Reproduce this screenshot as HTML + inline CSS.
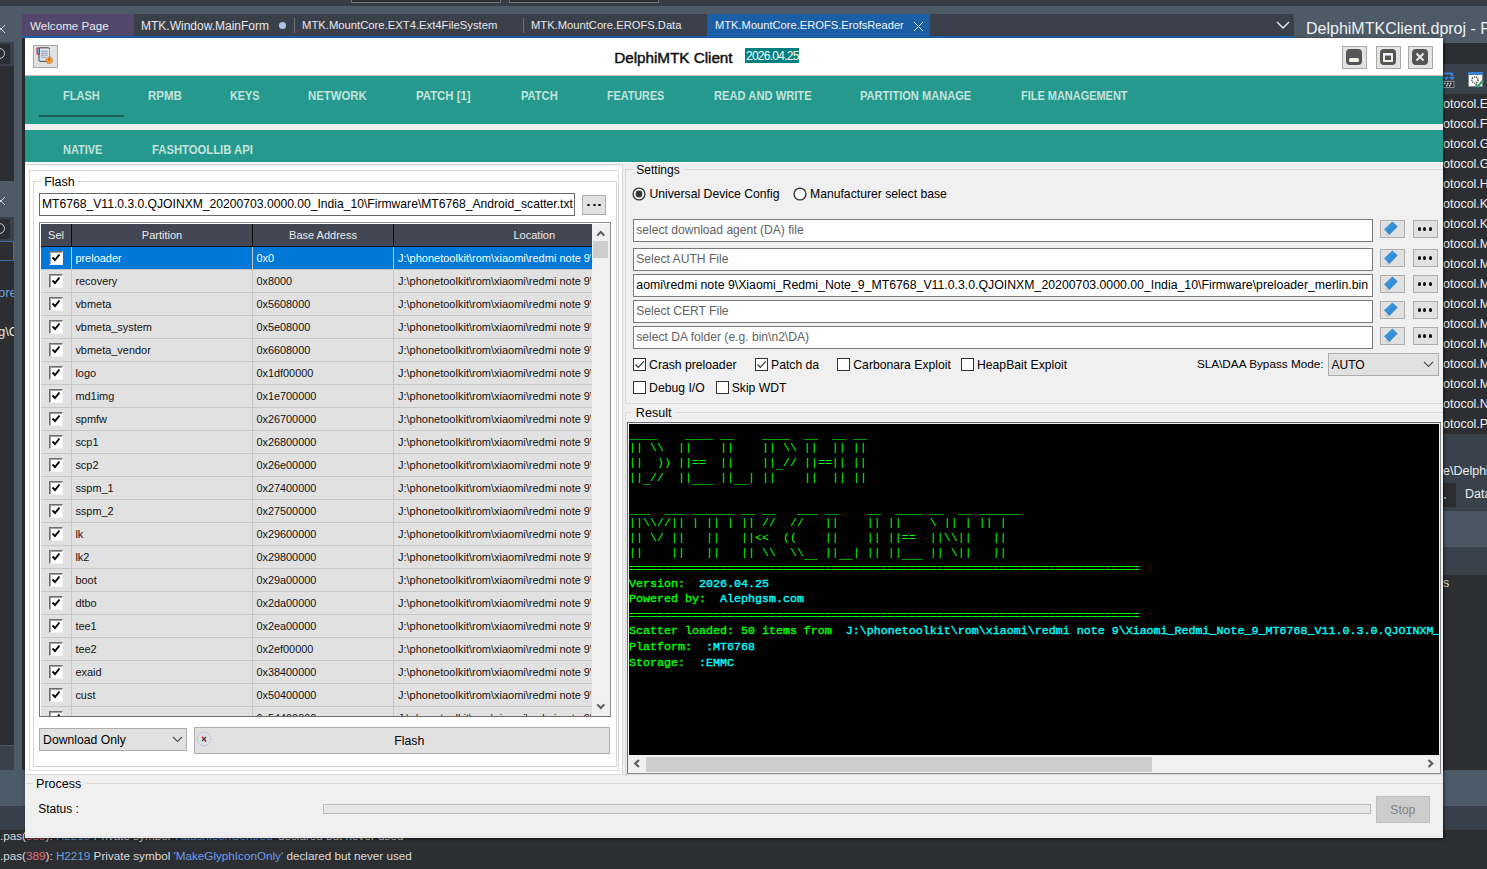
<!DOCTYPE html>
<html><head><meta charset="utf-8">
<style>
*{box-sizing:border-box;margin:0;padding:0}
html,body{width:1487px;height:869px;overflow:hidden;background:#2c2e32;font-family:"Liberation Sans",sans-serif;position:relative}
.a{position:absolute}
.t{position:absolute;white-space:pre;line-height:1}
.mono{font-family:"Liberation Mono",monospace}
</style></head><body>
<!-- IDE chrome -->
<div class="a" style="left:0;top:0;width:1487px;height:6px;background:#363c43"></div>
<div class="a" style="left:351px;top:-1px;width:150px;height:4px;border:1px solid #6d7680;border-top:none;background:#2b2e33"></div>
<div class="a" style="left:509px;top:-1px;width:150px;height:4px;border:1px solid #6d7680;border-top:none;background:#2b2e33"></div>
<div class="a" style="left:0;top:6px;width:1487px;height:37px;background:#4e5a66"></div>
<div class="a" style="left:22px;top:14px;width:1272px;height:22px;background:#39404a"></div>
<div class="a" style="left:22px;top:36px;width:1272px;height:2px;background:#1a63b0"></div>
<div class="a" style="left:22px;top:14px;width:112px;height:22px;background:#52486b"></div>
<div class="t" style="left:30px;top:20.3px;font-size:11.65px;color:#e8e8ee">Welcome Page</div>
<div class="t" style="left:141px;top:20px;font-size:12px;color:#e8e8ee">MTK.Window.MainForm</div>
<div class="a" style="left:279px;top:22px;width:7px;height:7px;border-radius:50%;background:#a9c4e4"></div>
<div class="a" style="left:294px;top:18px;width:1px;height:15px;background:#6a727c"></div>
<div class="t" style="left:302px;top:20.3px;font-size:11.28px;color:#e8e8ee">MTK.MountCore.EXT4.Ext4FileSystem</div>
<div class="a" style="left:523px;top:18px;width:1px;height:15px;background:#6a727c"></div>
<div class="t" style="left:531px;top:20.3px;font-size:11.2px;color:#e8e8ee">MTK.MountCore.EROFS.Data</div>
<div class="a" style="left:707px;top:14px;width:223px;height:22px;background:#1a5fa6"></div>
<div class="t" style="left:715px;top:20.3px;font-size:11.15px;color:#f2f4f8">MTK.MountCore.EROFS.ErofsReader</div>
<svg class="a" style="left:913px;top:21px" width="11" height="11"><path d="M1 1L10 10M10 1L1 10" stroke="#e8eef6" stroke-width="1"/></svg>
<svg class="a" style="left:1276px;top:21px" width="14" height="9"><path d="M1 1L7 7L13 1" stroke="#e0e4e8" stroke-width="1.5" fill="none"/></svg>
<div class="t" style="left:1306px;top:20.5px;font-size:16px;color:#eef0f4">DelphiMTKClient.dproj - Project1</div>

<!-- left IDE panel -->
<div class="a" style="left:0;top:38px;width:22px;height:732px;background:#4e5a66"></div>
<div class="a" style="left:22px;top:38px;width:3px;height:732px;background:#2a2c30"></div>
<div class="a" style="left:0;top:42px;width:14px;height:24px;background:#3a414a"></div>
<div class="a" style="left:0;top:44px;width:10px;height:20px;background:#2b2e33"></div>
<div class="a" style="left:-6px;top:48px;width:11px;height:11px;border:1.5px solid #c8ccd2;border-radius:50%"></div>
<div class="a" style="left:0;top:66px;width:14px;height:115px;background:#2c2e32"></div>
<div class="a" style="left:0;top:217px;width:14px;height:24px;background:#3a414a"></div>
<div class="a" style="left:0;top:219px;width:10px;height:20px;background:#2b2e33"></div>
<div class="a" style="left:-6px;top:223px;width:11px;height:11px;border:1.5px solid #c8ccd2;border-radius:50%"></div>
<div class="a" style="left:0;top:241px;width:14px;height:504px;background:#2c2e32"></div>
<div class="a" style="left:-2px;top:241px;width:16px;height:20px;border:1px solid #3d6fa8"></div>
<div class="a" style="left:0;top:280px;width:14px;height:60px;overflow:hidden"><div class="t" style="left:-2px;top:5.5px;font-size:13px;color:#6fa3de">ore</div><div class="t" style="left:-2px;top:44.5px;font-size:13px;color:#e6e6e6">g\C</div></div>

<svg class="a" style="left:0;top:195.5px" width="8" height="12"><path d="M-3 1L5 9M5 1L-3 9" stroke="#d0d4d8" stroke-width="1"/></svg>
<svg class="a" style="left:0;top:24px" width="8" height="12"><path d="M-3 1L5 9M5 1L-3 9" stroke="#d0d4d8" stroke-width="1"/></svg>
<div class="a" style="left:0;top:745.5px;width:14px;height:25px;background:#39424c"></div>
<div class="a" style="left:0;top:770px;width:1487px;height:36px;background:#4c5a67"></div>
<div class="a" style="left:0;top:806px;width:1487px;height:24px;background:#37404a"></div>

<!-- right IDE panel -->
<div class="a" style="left:1443px;top:43px;width:44px;height:21px;background:#2b2e33"></div>
<div class="a" style="left:1443px;top:64px;width:44px;height:30px;background:#39414a"></div>
<div class="a" style="left:1443px;top:94px;width:44px;height:340px;background:#2c2e32"></div>
<svg class="a" style="left:1443px;top:72px" width="12" height="16" viewBox="0 0 12 16">
<path d="M0 1.5H9V4.5" stroke="#3b7fd0" stroke-width="2.2" fill="none"/>
<path d="M0 5L3 8.5L6 5ZM6 5L9 8.5L12 5Z" fill="#3b7fd0"/>
<rect x="0" y="9.5" width="11" height="6" fill="#2e3238" stroke="#8a8f96" stroke-width="1"/>
<path d="M1 11.5h1.5M4 11.5h1.5M7 11.5h1.5M3 13.5h1.5M6 13.5h1.5" stroke="#e0e0e0" stroke-width="1.3"/>
</svg>
<svg class="a" style="left:1468px;top:72px" width="16" height="16" viewBox="0 0 16 16">
<rect x="0.5" y="0.5" width="14" height="14" fill="#fff" stroke="#7a8088" stroke-width=".8"/>
<rect x="0" y="0" width="15" height="3" fill="#3b7fd0"/>
<circle cx="7" cy="8" r="3" fill="none" stroke="#555" stroke-width="1.6" stroke-dasharray="1.2 0.9"/>
<path d="M7.5 12L10 14.5L15 8.5" stroke="#3fa06a" stroke-width="2.2" fill="none"/>
</svg>

<div class="a" style="left:1443px;top:434px;width:44px;height:77px;background:#39414a"></div>
<div class="a" style="left:1443px;top:511px;width:44px;height:36px;background:#4b5763"></div>
<div class="a" style="left:1443px;top:547px;width:44px;height:28px;background:#39414a"></div>
<div class="a" style="left:1443px;top:575px;width:44px;height:195px;background:#2c2e32"></div>
<div class="t" style="left:1443px;top:98.4px;font-size:12.5px;color:#eeeeee">otocol.Er</div>
<div class="t" style="left:1443px;top:118.4px;font-size:12.5px;color:#eeeeee">otocol.Fo</div>
<div class="t" style="left:1443px;top:138.4px;font-size:12.5px;color:#eeeeee">otocol.G</div>
<div class="t" style="left:1443px;top:158.4px;font-size:12.5px;color:#eeeeee">otocol.G</div>
<div class="t" style="left:1443px;top:178.4px;font-size:12.5px;color:#eeeeee">otocol.H</div>
<div class="t" style="left:1443px;top:198.4px;font-size:12.5px;color:#eeeeee">otocol.K</div>
<div class="t" style="left:1443px;top:218.4px;font-size:12.5px;color:#eeeeee">otocol.K</div>
<div class="t" style="left:1443px;top:238.4px;font-size:12.5px;color:#eeeeee">otocol.M</div>
<div class="t" style="left:1443px;top:258.4px;font-size:12.5px;color:#eeeeee">otocol.M</div>
<div class="t" style="left:1443px;top:278.4px;font-size:12.5px;color:#eeeeee">otocol.M</div>
<div class="t" style="left:1443px;top:298.4px;font-size:12.5px;color:#eeeeee">otocol.M</div>
<div class="t" style="left:1443px;top:318.4px;font-size:12.5px;color:#eeeeee">otocol.M</div>
<div class="t" style="left:1443px;top:338.4px;font-size:12.5px;color:#eeeeee">otocol.M</div>
<div class="t" style="left:1443px;top:358.4px;font-size:12.5px;color:#eeeeee">otocol.M</div>
<div class="t" style="left:1443px;top:378.4px;font-size:12.5px;color:#eeeeee">otocol.M</div>
<div class="t" style="left:1443px;top:398.4px;font-size:12.5px;color:#eeeeee">otocol.N</div>
<div class="t" style="left:1443px;top:418.4px;font-size:12.5px;color:#eeeeee">otocol.P</div>
<div class="t" style="left:1443px;top:465.1px;font-size:12.5px;color:#eeeeee">e\Delphi</div>
<div class="a" style="left:1443px;top:483px;width:13px;height:24px;background:#2b2d30"></div>
<div class="a" style="left:1444px;top:497px;width:2px;height:2px;background:#7ab0e0"></div>
<div class="t" style="left:1465px;top:488.3px;font-size:12.5px;color:#eeeeee">Data</div>
<div class="t" style="left:1443px;top:577.4px;font-size:12.5px;color:#dddddd">s</div>


<!-- bottom messages -->
<div class="t" style="left:0px;top:829.5px;font-size:11.7px;color:#dcdcdc">.pas(<span style="color:#e0707e">388</span>): <span style="color:#6a9fd8">H2219</span> Private symbol <span style="color:#6d9eeb">'AttachIconCentred'</span> declared but never used</div>
<div class="t" style="left:0px;top:849.5px;font-size:11.7px;color:#dcdcdc">.pas(<span style="color:#e0707e">389</span>): <span style="color:#6a9fd8">H2219</span> Private symbol <span style="color:#6d9eeb">'MakeGlyphIconOnly'</span> declared but never used</div>

<!-- WINDOW -->
<div id="win" class="a" style="left:25px;top:38px;width:1418px;height:800px;background:#f0f0f0;box-shadow:1px 1px 3px rgba(0,0,0,.6)"></div>
<!-- title -->
<div class="a" style="left:25px;top:38px;width:1418px;height:37px;background:#fff"></div>
<div class="a" style="left:25px;top:75px;width:1418px;height:1px;background:#c8c4c4"></div>
<div class="a" style="left:33px;top:45px;width:25px;height:23px;background:#e1e1e1;border:1px solid #a6a6a6"></div>
<svg class="a" style="left:36px;top:47px" width="20" height="18" viewBox="0 0 20 18">
<rect x="3" y="0.8" width="10.5" height="13.5" rx="1" fill="#dfe6ef" stroke="#3a3f48" stroke-width="1"/>
<path d="M4.8 4.2h7M4.8 6.2h7M4.8 8.2h7M4.8 10.2h5" stroke="#8f9db0" stroke-width="1"/>
<path d="M13.5 2v9" stroke="#8a8af0" stroke-width="1"/>
<rect x="1" y="1" width="2.4" height="6" fill="#40c0f0" stroke="#c82030" stroke-width="1"/>
<circle cx="13.3" cy="13.3" r="3.4" fill="#f4a21c" stroke="#8a60e0" stroke-width=".8" stroke-dasharray="1 1.1"/>
<path d="M13.3 11.2v2.6" stroke="#e02828" stroke-width="1.1"/>
</svg>
<div class="t" style="left:614.3px;top:49.5px;font-size:15.3px;letter-spacing:-0.05px;-webkit-text-stroke:0.45px #111;color:#111">DelphiMTK Client</div>
<div class="a" style="left:745px;top:48px;width:54px;height:15px;background:#008080"></div>
<div class="t" style="left:746px;top:50px;font-size:12px;letter-spacing:-0.75px;color:#fff">2026.04.25</div>
<!-- window buttons -->
<div class="a" style="left:1342px;top:46px;width:25px;height:23px;background:#e4e4e4;border:1px solid #a8a8a8"></div>
<div class="a" style="left:1346px;top:49px;width:16px;height:16px;background:#555;border-radius:4px"></div>
<div class="a" style="left:1349px;top:58px;width:10px;height:4px;background:#f2f2e6;border-radius:1.5px"></div>
<div class="a" style="left:1376px;top:46px;width:25px;height:23px;background:#e4e4e4;border:1px solid #a8a8a8"></div>
<div class="a" style="left:1380px;top:49px;width:16px;height:16px;background:#555;border-radius:4px"></div>
<div class="a" style="left:1383px;top:53px;width:10px;height:9px;border:2px solid #f2f2e6;border-top:3px solid #f2f2e6"></div>
<div class="a" style="left:1385px;top:55px;width:6px;height:1px;background:#a8a8e0"></div>
<div class="a" style="left:1408px;top:46px;width:25px;height:23px;background:#e4e4e4;border:1px solid #a8a8a8"></div>
<div class="a" style="left:1412px;top:49px;width:16px;height:16px;background:#555;border-radius:4px"></div>
<svg class="a" style="left:1412px;top:49px" width="16" height="16"><path d="M4.5 4.5L11.5 11.5M11.5 4.5L4.5 11.5" stroke="#eceaf0" stroke-width="2"/></svg>
<!-- tab bars -->
<div class="a" style="left:25px;top:76px;width:1418px;height:48px;background:#26998f"></div>
<div class="a" style="left:25px;top:124px;width:1418px;height:6px;background:#efefef"></div>
<div class="a" style="left:25px;top:130px;width:1418px;height:32px;background:#26998f"></div>
<div class="a" style="left:39px;top:115px;width:85px;height:2px;background:#1b5e57"></div>
<div class="t" style="left:63.1px;top:89.3px;font-size:13px;font-weight:bold;color:#c3e3dc;transform-origin:0 0;transform:scaleX(0.849)">FLASH</div>
<div class="t" style="left:148.3px;top:89.3px;font-size:13px;font-weight:bold;color:#c3e3dc;transform-origin:0 0;transform:scaleX(0.880)">RPMB</div>
<div class="t" style="left:230.0px;top:89.3px;font-size:13px;font-weight:bold;color:#c3e3dc;transform-origin:0 0;transform:scaleX(0.836)">KEYS</div>
<div class="t" style="left:308.0px;top:89.3px;font-size:13px;font-weight:bold;color:#c3e3dc;transform-origin:0 0;transform:scaleX(0.874)">NETWORK</div>
<div class="t" style="left:416.2px;top:89.3px;font-size:13px;font-weight:bold;color:#c3e3dc;transform-origin:0 0;transform:scaleX(0.876)">PATCH [1]</div>
<div class="t" style="left:521.0px;top:89.3px;font-size:13px;font-weight:bold;color:#c3e3dc;transform-origin:0 0;transform:scaleX(0.856)">PATCH</div>
<div class="t" style="left:607.2px;top:89.3px;font-size:13px;font-weight:bold;color:#c3e3dc;transform-origin:0 0;transform:scaleX(0.829)">FEATURES</div>
<div class="t" style="left:714.2px;top:89.3px;font-size:13px;font-weight:bold;color:#c3e3dc;transform-origin:0 0;transform:scaleX(0.859)">READ AND WRITE</div>
<div class="t" style="left:860.4px;top:89.3px;font-size:13px;font-weight:bold;color:#c3e3dc;transform-origin:0 0;transform:scaleX(0.852)">PARTITION MANAGE</div>
<div class="t" style="left:1021.0px;top:89.3px;font-size:13px;font-weight:bold;color:#c3e3dc;transform-origin:0 0;transform:scaleX(0.843)">FILE MANAGEMENT</div>
<div class="t" style="left:63.1px;top:142.9px;font-size:13px;font-weight:bold;color:#c3e3dc;transform-origin:0 0;transform:scaleX(0.843)">NATIVE</div>
<div class="t" style="left:152.0px;top:142.9px;font-size:13px;font-weight:bold;color:#c3e3dc;transform-origin:0 0;transform:scaleX(0.868)">FASHTOOLLIB API</div>

<div class="a" style="left:25px;top:162px;width:1418px;height:1px;background:#faf6f6"></div>
<div class="a" style="left:25px;top:163px;width:1418px;height:2px;background:#f0f0f0"></div>
<div class="a" style="left:25px;top:164px;width:598px;height:611px;background:#fff;border:1px solid #d4d4d4;border-left:none"></div>
<div class="a" style="left:29px;top:170px;width:590px;height:601px;border:1px solid #d9d9d9"></div>
<div class="a" style="left:33px;top:181px;width:584px;height:586px;border:1px solid #d9d9d9;border-bottom-color:#d0d0d0"></div>
<div class="a" style="left:41px;top:176px;width:36px;height:12px;background:#fff"></div>
<div class="t" style="left:44.2px;top:175.92px;font-size:12.5px;color:#000">Flash</div>
<div class="a" style="left:39px;top:193px;width:536px;height:23px;background:#fff;border:1px solid #6a6a6a"></div>
<div class="a" style="left:40px;top:194px;width:535px;height:21px;overflow:hidden">
<div class="t" style="left:2px;top:4.23px;font-size:12.13px;color:#000">MT6768_V11.0.3.0.QJOINXM_20200703.0000.00_India_10\Firmware\MT6768_Android_scatter.txt</div>
</div>
<div class="a" style="left:582px;top:195px;width:24px;height:20px;background:#e1e1e1;border:1px solid #adadad"></div>
<div class="a" style="left:586.9px;top:203.8px;width:3.2px;height:2.6px;background:#111;border-radius:50%"></div>
<div class="a" style="left:592.5px;top:203.8px;width:3.2px;height:2.6px;background:#111;border-radius:50%"></div>
<div class="a" style="left:597.7px;top:203.8px;width:3.2px;height:2.6px;background:#111;border-radius:50%"></div>
<div class="a" style="left:39px;top:222px;width:572px;height:495px;background:#fff;border:1px solid #8c8c8c;border-left:1px solid #7a7a7a;border-bottom:1px solid #6e6e6e"></div>
<div class="a" style="left:41px;top:224px;width:551px;height:492px;overflow:hidden;background:#e1e1e1">
<div class="a" style="left:0px;top:0px;width:551px;height:22px;background:#434653"></div>
<div class="a" style="left:0px;top:22px;width:551px;height:1px;background:#15161a"></div>
<div class="a" style="left:29.9px;top:0px;width:1.3px;height:22px;background:#0a0a0a"></div>
<div class="a" style="left:211.0px;top:0px;width:1.3px;height:22px;background:#0a0a0a"></div>
<div class="a" style="left:351.9px;top:0px;width:1.3px;height:22px;background:#0a0a0a"></div>
<div class="t" style="left:7.05px;top:6.09px;font-size:11px;color:#ececec">Sel</div>
<div class="t" style="left:100.8px;top:6.09px;font-size:11px;color:#ececec">Partition</div>
<div class="t" style="left:248.05px;top:6.09px;font-size:11px;color:#ececec">Base Address</div>
<div class="t" style="left:472.5px;top:6.09px;font-size:11px;color:#ececec">Location</div>
<div class="a" style="left:0px;top:23px;width:551px;height:23px;background:#0078d7"></div>
<div class="a" style="left:0px;top:45px;width:551px;height:1px;background:#c6c6c6"></div>
<div class="a" style="left:29.9px;top:23px;width:1px;height:23px;background:#c6c6c6"></div>
<div class="a" style="left:211.1px;top:23px;width:1px;height:23px;background:#c6c6c6"></div>
<div class="a" style="left:351.8px;top:23px;width:1px;height:23px;background:#c6c6c6"></div>
<div class="a" style="left:8.3px;top:27px;width:14px;height:14px;background:#fff;border-top:1px solid #6e6e6e;border-left:1px solid #6e6e6e;border-right:1px solid #f4f4f4;border-bottom:1px solid #f4f4f4;box-shadow:inset 1px 1px 0 #a0a0a0"></div>
<svg class="a" style="left:10px;top:29.0px" width="10" height="10"><path d="M1.5 4.5L4 7L8.5 1.5" stroke="#000" stroke-width="1.9" fill="none"/></svg>
<div class="t" style="left:34.4px;top:28.63px;font-size:10.95px;color:#fff">preloader</div>
<div class="t" style="left:215.4px;top:28.67px;font-size:10.9px;color:#fff">0x0</div>
<div class="a" style="left:356px;top:23.0px;width:194px;height:22px;overflow:hidden">
<div class="t" style="left:1px;top:5.59px;font-size:11px;color:#fff">J:\phonetoolkit\rom\xiaomi\redmi note 9\Xiaomi_Redmi_Note_9</div>
</div>
<div class="a" style="left:0px;top:46px;width:551px;height:23px;background:#e1e1e1"></div>
<div class="a" style="left:0px;top:68px;width:551px;height:1px;background:#c6c6c6"></div>
<div class="a" style="left:29.9px;top:46px;width:1px;height:23px;background:#c6c6c6"></div>
<div class="a" style="left:211.1px;top:46px;width:1px;height:23px;background:#c6c6c6"></div>
<div class="a" style="left:351.8px;top:46px;width:1px;height:23px;background:#c6c6c6"></div>
<div class="a" style="left:8.3px;top:50px;width:14px;height:14px;background:#fff;border-top:1px solid #6e6e6e;border-left:1px solid #6e6e6e;border-right:1px solid #f4f4f4;border-bottom:1px solid #f4f4f4;box-shadow:inset 1px 1px 0 #a0a0a0"></div>
<svg class="a" style="left:10px;top:52.0px" width="10" height="10"><path d="M1.5 4.5L4 7L8.5 1.5" stroke="#000" stroke-width="1.9" fill="none"/></svg>
<div class="t" style="left:34.4px;top:51.63px;font-size:10.95px;color:#111">recovery</div>
<div class="t" style="left:215.4px;top:51.67px;font-size:10.9px;color:#111">0x8000</div>
<div class="a" style="left:356px;top:46.0px;width:194px;height:22px;overflow:hidden">
<div class="t" style="left:1px;top:5.59px;font-size:11px;color:#111">J:\phonetoolkit\rom\xiaomi\redmi note 9\Xiaomi_Redmi_Note_9</div>
</div>
<div class="a" style="left:0px;top:69px;width:551px;height:23px;background:#e1e1e1"></div>
<div class="a" style="left:0px;top:91px;width:551px;height:1px;background:#c6c6c6"></div>
<div class="a" style="left:29.9px;top:69px;width:1px;height:23px;background:#c6c6c6"></div>
<div class="a" style="left:211.1px;top:69px;width:1px;height:23px;background:#c6c6c6"></div>
<div class="a" style="left:351.8px;top:69px;width:1px;height:23px;background:#c6c6c6"></div>
<div class="a" style="left:8.3px;top:73px;width:14px;height:14px;background:#fff;border-top:1px solid #6e6e6e;border-left:1px solid #6e6e6e;border-right:1px solid #f4f4f4;border-bottom:1px solid #f4f4f4;box-shadow:inset 1px 1px 0 #a0a0a0"></div>
<svg class="a" style="left:10px;top:75.0px" width="10" height="10"><path d="M1.5 4.5L4 7L8.5 1.5" stroke="#000" stroke-width="1.9" fill="none"/></svg>
<div class="t" style="left:34.4px;top:74.63px;font-size:10.95px;color:#111">vbmeta</div>
<div class="t" style="left:215.4px;top:74.67px;font-size:10.9px;color:#111">0x5608000</div>
<div class="a" style="left:356px;top:69.0px;width:194px;height:22px;overflow:hidden">
<div class="t" style="left:1px;top:5.59px;font-size:11px;color:#111">J:\phonetoolkit\rom\xiaomi\redmi note 9\Xiaomi_Redmi_Note_9</div>
</div>
<div class="a" style="left:0px;top:92px;width:551px;height:23px;background:#e1e1e1"></div>
<div class="a" style="left:0px;top:114px;width:551px;height:1px;background:#c6c6c6"></div>
<div class="a" style="left:29.9px;top:92px;width:1px;height:23px;background:#c6c6c6"></div>
<div class="a" style="left:211.1px;top:92px;width:1px;height:23px;background:#c6c6c6"></div>
<div class="a" style="left:351.8px;top:92px;width:1px;height:23px;background:#c6c6c6"></div>
<div class="a" style="left:8.3px;top:96px;width:14px;height:14px;background:#fff;border-top:1px solid #6e6e6e;border-left:1px solid #6e6e6e;border-right:1px solid #f4f4f4;border-bottom:1px solid #f4f4f4;box-shadow:inset 1px 1px 0 #a0a0a0"></div>
<svg class="a" style="left:10px;top:98.0px" width="10" height="10"><path d="M1.5 4.5L4 7L8.5 1.5" stroke="#000" stroke-width="1.9" fill="none"/></svg>
<div class="t" style="left:34.4px;top:97.63px;font-size:10.95px;color:#111">vbmeta_system</div>
<div class="t" style="left:215.4px;top:97.67px;font-size:10.9px;color:#111">0x5e08000</div>
<div class="a" style="left:356px;top:92.0px;width:194px;height:22px;overflow:hidden">
<div class="t" style="left:1px;top:5.59px;font-size:11px;color:#111">J:\phonetoolkit\rom\xiaomi\redmi note 9\Xiaomi_Redmi_Note_9</div>
</div>
<div class="a" style="left:0px;top:115px;width:551px;height:23px;background:#e1e1e1"></div>
<div class="a" style="left:0px;top:137px;width:551px;height:1px;background:#c6c6c6"></div>
<div class="a" style="left:29.9px;top:115px;width:1px;height:23px;background:#c6c6c6"></div>
<div class="a" style="left:211.1px;top:115px;width:1px;height:23px;background:#c6c6c6"></div>
<div class="a" style="left:351.8px;top:115px;width:1px;height:23px;background:#c6c6c6"></div>
<div class="a" style="left:8.3px;top:119px;width:14px;height:14px;background:#fff;border-top:1px solid #6e6e6e;border-left:1px solid #6e6e6e;border-right:1px solid #f4f4f4;border-bottom:1px solid #f4f4f4;box-shadow:inset 1px 1px 0 #a0a0a0"></div>
<svg class="a" style="left:10px;top:121.0px" width="10" height="10"><path d="M1.5 4.5L4 7L8.5 1.5" stroke="#000" stroke-width="1.9" fill="none"/></svg>
<div class="t" style="left:34.4px;top:120.63px;font-size:10.95px;color:#111">vbmeta_vendor</div>
<div class="t" style="left:215.4px;top:120.67px;font-size:10.9px;color:#111">0x6608000</div>
<div class="a" style="left:356px;top:115.0px;width:194px;height:22px;overflow:hidden">
<div class="t" style="left:1px;top:5.59px;font-size:11px;color:#111">J:\phonetoolkit\rom\xiaomi\redmi note 9\Xiaomi_Redmi_Note_9</div>
</div>
<div class="a" style="left:0px;top:138px;width:551px;height:23px;background:#e1e1e1"></div>
<div class="a" style="left:0px;top:160px;width:551px;height:1px;background:#c6c6c6"></div>
<div class="a" style="left:29.9px;top:138px;width:1px;height:23px;background:#c6c6c6"></div>
<div class="a" style="left:211.1px;top:138px;width:1px;height:23px;background:#c6c6c6"></div>
<div class="a" style="left:351.8px;top:138px;width:1px;height:23px;background:#c6c6c6"></div>
<div class="a" style="left:8.3px;top:142px;width:14px;height:14px;background:#fff;border-top:1px solid #6e6e6e;border-left:1px solid #6e6e6e;border-right:1px solid #f4f4f4;border-bottom:1px solid #f4f4f4;box-shadow:inset 1px 1px 0 #a0a0a0"></div>
<svg class="a" style="left:10px;top:144.0px" width="10" height="10"><path d="M1.5 4.5L4 7L8.5 1.5" stroke="#000" stroke-width="1.9" fill="none"/></svg>
<div class="t" style="left:34.4px;top:143.63px;font-size:10.95px;color:#111">logo</div>
<div class="t" style="left:215.4px;top:143.67px;font-size:10.9px;color:#111">0x1df00000</div>
<div class="a" style="left:356px;top:138.0px;width:194px;height:22px;overflow:hidden">
<div class="t" style="left:1px;top:5.59px;font-size:11px;color:#111">J:\phonetoolkit\rom\xiaomi\redmi note 9\Xiaomi_Redmi_Note_9</div>
</div>
<div class="a" style="left:0px;top:161px;width:551px;height:23px;background:#e1e1e1"></div>
<div class="a" style="left:0px;top:183px;width:551px;height:1px;background:#c6c6c6"></div>
<div class="a" style="left:29.9px;top:161px;width:1px;height:23px;background:#c6c6c6"></div>
<div class="a" style="left:211.1px;top:161px;width:1px;height:23px;background:#c6c6c6"></div>
<div class="a" style="left:351.8px;top:161px;width:1px;height:23px;background:#c6c6c6"></div>
<div class="a" style="left:8.3px;top:165px;width:14px;height:14px;background:#fff;border-top:1px solid #6e6e6e;border-left:1px solid #6e6e6e;border-right:1px solid #f4f4f4;border-bottom:1px solid #f4f4f4;box-shadow:inset 1px 1px 0 #a0a0a0"></div>
<svg class="a" style="left:10px;top:167.0px" width="10" height="10"><path d="M1.5 4.5L4 7L8.5 1.5" stroke="#000" stroke-width="1.9" fill="none"/></svg>
<div class="t" style="left:34.4px;top:166.63px;font-size:10.95px;color:#111">md1img</div>
<div class="t" style="left:215.4px;top:166.67px;font-size:10.9px;color:#111">0x1e700000</div>
<div class="a" style="left:356px;top:161.0px;width:194px;height:22px;overflow:hidden">
<div class="t" style="left:1px;top:5.59px;font-size:11px;color:#111">J:\phonetoolkit\rom\xiaomi\redmi note 9\Xiaomi_Redmi_Note_9</div>
</div>
<div class="a" style="left:0px;top:184px;width:551px;height:23px;background:#e1e1e1"></div>
<div class="a" style="left:0px;top:206px;width:551px;height:1px;background:#c6c6c6"></div>
<div class="a" style="left:29.9px;top:184px;width:1px;height:23px;background:#c6c6c6"></div>
<div class="a" style="left:211.1px;top:184px;width:1px;height:23px;background:#c6c6c6"></div>
<div class="a" style="left:351.8px;top:184px;width:1px;height:23px;background:#c6c6c6"></div>
<div class="a" style="left:8.3px;top:188px;width:14px;height:14px;background:#fff;border-top:1px solid #6e6e6e;border-left:1px solid #6e6e6e;border-right:1px solid #f4f4f4;border-bottom:1px solid #f4f4f4;box-shadow:inset 1px 1px 0 #a0a0a0"></div>
<svg class="a" style="left:10px;top:190.0px" width="10" height="10"><path d="M1.5 4.5L4 7L8.5 1.5" stroke="#000" stroke-width="1.9" fill="none"/></svg>
<div class="t" style="left:34.4px;top:189.63px;font-size:10.95px;color:#111">spmfw</div>
<div class="t" style="left:215.4px;top:189.67px;font-size:10.9px;color:#111">0x26700000</div>
<div class="a" style="left:356px;top:184.0px;width:194px;height:22px;overflow:hidden">
<div class="t" style="left:1px;top:5.59px;font-size:11px;color:#111">J:\phonetoolkit\rom\xiaomi\redmi note 9\Xiaomi_Redmi_Note_9</div>
</div>
<div class="a" style="left:0px;top:207px;width:551px;height:23px;background:#e1e1e1"></div>
<div class="a" style="left:0px;top:229px;width:551px;height:1px;background:#c6c6c6"></div>
<div class="a" style="left:29.9px;top:207px;width:1px;height:23px;background:#c6c6c6"></div>
<div class="a" style="left:211.1px;top:207px;width:1px;height:23px;background:#c6c6c6"></div>
<div class="a" style="left:351.8px;top:207px;width:1px;height:23px;background:#c6c6c6"></div>
<div class="a" style="left:8.3px;top:211px;width:14px;height:14px;background:#fff;border-top:1px solid #6e6e6e;border-left:1px solid #6e6e6e;border-right:1px solid #f4f4f4;border-bottom:1px solid #f4f4f4;box-shadow:inset 1px 1px 0 #a0a0a0"></div>
<svg class="a" style="left:10px;top:213.0px" width="10" height="10"><path d="M1.5 4.5L4 7L8.5 1.5" stroke="#000" stroke-width="1.9" fill="none"/></svg>
<div class="t" style="left:34.4px;top:212.63px;font-size:10.95px;color:#111">scp1</div>
<div class="t" style="left:215.4px;top:212.67px;font-size:10.9px;color:#111">0x26800000</div>
<div class="a" style="left:356px;top:207.0px;width:194px;height:22px;overflow:hidden">
<div class="t" style="left:1px;top:5.59px;font-size:11px;color:#111">J:\phonetoolkit\rom\xiaomi\redmi note 9\Xiaomi_Redmi_Note_9</div>
</div>
<div class="a" style="left:0px;top:230px;width:551px;height:23px;background:#e1e1e1"></div>
<div class="a" style="left:0px;top:252px;width:551px;height:1px;background:#c6c6c6"></div>
<div class="a" style="left:29.9px;top:230px;width:1px;height:23px;background:#c6c6c6"></div>
<div class="a" style="left:211.1px;top:230px;width:1px;height:23px;background:#c6c6c6"></div>
<div class="a" style="left:351.8px;top:230px;width:1px;height:23px;background:#c6c6c6"></div>
<div class="a" style="left:8.3px;top:234px;width:14px;height:14px;background:#fff;border-top:1px solid #6e6e6e;border-left:1px solid #6e6e6e;border-right:1px solid #f4f4f4;border-bottom:1px solid #f4f4f4;box-shadow:inset 1px 1px 0 #a0a0a0"></div>
<svg class="a" style="left:10px;top:236.0px" width="10" height="10"><path d="M1.5 4.5L4 7L8.5 1.5" stroke="#000" stroke-width="1.9" fill="none"/></svg>
<div class="t" style="left:34.4px;top:235.63px;font-size:10.95px;color:#111">scp2</div>
<div class="t" style="left:215.4px;top:235.67px;font-size:10.9px;color:#111">0x26e00000</div>
<div class="a" style="left:356px;top:230.0px;width:194px;height:22px;overflow:hidden">
<div class="t" style="left:1px;top:5.59px;font-size:11px;color:#111">J:\phonetoolkit\rom\xiaomi\redmi note 9\Xiaomi_Redmi_Note_9</div>
</div>
<div class="a" style="left:0px;top:253px;width:551px;height:23px;background:#e1e1e1"></div>
<div class="a" style="left:0px;top:275px;width:551px;height:1px;background:#c6c6c6"></div>
<div class="a" style="left:29.9px;top:253px;width:1px;height:23px;background:#c6c6c6"></div>
<div class="a" style="left:211.1px;top:253px;width:1px;height:23px;background:#c6c6c6"></div>
<div class="a" style="left:351.8px;top:253px;width:1px;height:23px;background:#c6c6c6"></div>
<div class="a" style="left:8.3px;top:257px;width:14px;height:14px;background:#fff;border-top:1px solid #6e6e6e;border-left:1px solid #6e6e6e;border-right:1px solid #f4f4f4;border-bottom:1px solid #f4f4f4;box-shadow:inset 1px 1px 0 #a0a0a0"></div>
<svg class="a" style="left:10px;top:259.0px" width="10" height="10"><path d="M1.5 4.5L4 7L8.5 1.5" stroke="#000" stroke-width="1.9" fill="none"/></svg>
<div class="t" style="left:34.4px;top:258.63px;font-size:10.95px;color:#111">sspm_1</div>
<div class="t" style="left:215.4px;top:258.67px;font-size:10.9px;color:#111">0x27400000</div>
<div class="a" style="left:356px;top:253.0px;width:194px;height:22px;overflow:hidden">
<div class="t" style="left:1px;top:5.59px;font-size:11px;color:#111">J:\phonetoolkit\rom\xiaomi\redmi note 9\Xiaomi_Redmi_Note_9</div>
</div>
<div class="a" style="left:0px;top:276px;width:551px;height:23px;background:#e1e1e1"></div>
<div class="a" style="left:0px;top:298px;width:551px;height:1px;background:#c6c6c6"></div>
<div class="a" style="left:29.9px;top:276px;width:1px;height:23px;background:#c6c6c6"></div>
<div class="a" style="left:211.1px;top:276px;width:1px;height:23px;background:#c6c6c6"></div>
<div class="a" style="left:351.8px;top:276px;width:1px;height:23px;background:#c6c6c6"></div>
<div class="a" style="left:8.3px;top:280px;width:14px;height:14px;background:#fff;border-top:1px solid #6e6e6e;border-left:1px solid #6e6e6e;border-right:1px solid #f4f4f4;border-bottom:1px solid #f4f4f4;box-shadow:inset 1px 1px 0 #a0a0a0"></div>
<svg class="a" style="left:10px;top:282.0px" width="10" height="10"><path d="M1.5 4.5L4 7L8.5 1.5" stroke="#000" stroke-width="1.9" fill="none"/></svg>
<div class="t" style="left:34.4px;top:281.63px;font-size:10.95px;color:#111">sspm_2</div>
<div class="t" style="left:215.4px;top:281.67px;font-size:10.9px;color:#111">0x27500000</div>
<div class="a" style="left:356px;top:276.0px;width:194px;height:22px;overflow:hidden">
<div class="t" style="left:1px;top:5.59px;font-size:11px;color:#111">J:\phonetoolkit\rom\xiaomi\redmi note 9\Xiaomi_Redmi_Note_9</div>
</div>
<div class="a" style="left:0px;top:299px;width:551px;height:23px;background:#e1e1e1"></div>
<div class="a" style="left:0px;top:321px;width:551px;height:1px;background:#c6c6c6"></div>
<div class="a" style="left:29.9px;top:299px;width:1px;height:23px;background:#c6c6c6"></div>
<div class="a" style="left:211.1px;top:299px;width:1px;height:23px;background:#c6c6c6"></div>
<div class="a" style="left:351.8px;top:299px;width:1px;height:23px;background:#c6c6c6"></div>
<div class="a" style="left:8.3px;top:303px;width:14px;height:14px;background:#fff;border-top:1px solid #6e6e6e;border-left:1px solid #6e6e6e;border-right:1px solid #f4f4f4;border-bottom:1px solid #f4f4f4;box-shadow:inset 1px 1px 0 #a0a0a0"></div>
<svg class="a" style="left:10px;top:305.0px" width="10" height="10"><path d="M1.5 4.5L4 7L8.5 1.5" stroke="#000" stroke-width="1.9" fill="none"/></svg>
<div class="t" style="left:34.4px;top:304.63px;font-size:10.95px;color:#111">lk</div>
<div class="t" style="left:215.4px;top:304.67px;font-size:10.9px;color:#111">0x29600000</div>
<div class="a" style="left:356px;top:299.0px;width:194px;height:22px;overflow:hidden">
<div class="t" style="left:1px;top:5.59px;font-size:11px;color:#111">J:\phonetoolkit\rom\xiaomi\redmi note 9\Xiaomi_Redmi_Note_9</div>
</div>
<div class="a" style="left:0px;top:322px;width:551px;height:23px;background:#e1e1e1"></div>
<div class="a" style="left:0px;top:344px;width:551px;height:1px;background:#c6c6c6"></div>
<div class="a" style="left:29.9px;top:322px;width:1px;height:23px;background:#c6c6c6"></div>
<div class="a" style="left:211.1px;top:322px;width:1px;height:23px;background:#c6c6c6"></div>
<div class="a" style="left:351.8px;top:322px;width:1px;height:23px;background:#c6c6c6"></div>
<div class="a" style="left:8.3px;top:326px;width:14px;height:14px;background:#fff;border-top:1px solid #6e6e6e;border-left:1px solid #6e6e6e;border-right:1px solid #f4f4f4;border-bottom:1px solid #f4f4f4;box-shadow:inset 1px 1px 0 #a0a0a0"></div>
<svg class="a" style="left:10px;top:328.0px" width="10" height="10"><path d="M1.5 4.5L4 7L8.5 1.5" stroke="#000" stroke-width="1.9" fill="none"/></svg>
<div class="t" style="left:34.4px;top:327.63px;font-size:10.95px;color:#111">lk2</div>
<div class="t" style="left:215.4px;top:327.67px;font-size:10.9px;color:#111">0x29800000</div>
<div class="a" style="left:356px;top:322.0px;width:194px;height:22px;overflow:hidden">
<div class="t" style="left:1px;top:5.59px;font-size:11px;color:#111">J:\phonetoolkit\rom\xiaomi\redmi note 9\Xiaomi_Redmi_Note_9</div>
</div>
<div class="a" style="left:0px;top:345px;width:551px;height:23px;background:#e1e1e1"></div>
<div class="a" style="left:0px;top:367px;width:551px;height:1px;background:#c6c6c6"></div>
<div class="a" style="left:29.9px;top:345px;width:1px;height:23px;background:#c6c6c6"></div>
<div class="a" style="left:211.1px;top:345px;width:1px;height:23px;background:#c6c6c6"></div>
<div class="a" style="left:351.8px;top:345px;width:1px;height:23px;background:#c6c6c6"></div>
<div class="a" style="left:8.3px;top:349px;width:14px;height:14px;background:#fff;border-top:1px solid #6e6e6e;border-left:1px solid #6e6e6e;border-right:1px solid #f4f4f4;border-bottom:1px solid #f4f4f4;box-shadow:inset 1px 1px 0 #a0a0a0"></div>
<svg class="a" style="left:10px;top:351.0px" width="10" height="10"><path d="M1.5 4.5L4 7L8.5 1.5" stroke="#000" stroke-width="1.9" fill="none"/></svg>
<div class="t" style="left:34.4px;top:350.63px;font-size:10.95px;color:#111">boot</div>
<div class="t" style="left:215.4px;top:350.67px;font-size:10.9px;color:#111">0x29a00000</div>
<div class="a" style="left:356px;top:345.0px;width:194px;height:22px;overflow:hidden">
<div class="t" style="left:1px;top:5.59px;font-size:11px;color:#111">J:\phonetoolkit\rom\xiaomi\redmi note 9\Xiaomi_Redmi_Note_9</div>
</div>
<div class="a" style="left:0px;top:368px;width:551px;height:23px;background:#e1e1e1"></div>
<div class="a" style="left:0px;top:390px;width:551px;height:1px;background:#c6c6c6"></div>
<div class="a" style="left:29.9px;top:368px;width:1px;height:23px;background:#c6c6c6"></div>
<div class="a" style="left:211.1px;top:368px;width:1px;height:23px;background:#c6c6c6"></div>
<div class="a" style="left:351.8px;top:368px;width:1px;height:23px;background:#c6c6c6"></div>
<div class="a" style="left:8.3px;top:372px;width:14px;height:14px;background:#fff;border-top:1px solid #6e6e6e;border-left:1px solid #6e6e6e;border-right:1px solid #f4f4f4;border-bottom:1px solid #f4f4f4;box-shadow:inset 1px 1px 0 #a0a0a0"></div>
<svg class="a" style="left:10px;top:374.0px" width="10" height="10"><path d="M1.5 4.5L4 7L8.5 1.5" stroke="#000" stroke-width="1.9" fill="none"/></svg>
<div class="t" style="left:34.4px;top:373.63px;font-size:10.95px;color:#111">dtbo</div>
<div class="t" style="left:215.4px;top:373.67px;font-size:10.9px;color:#111">0x2da00000</div>
<div class="a" style="left:356px;top:368.0px;width:194px;height:22px;overflow:hidden">
<div class="t" style="left:1px;top:5.59px;font-size:11px;color:#111">J:\phonetoolkit\rom\xiaomi\redmi note 9\Xiaomi_Redmi_Note_9</div>
</div>
<div class="a" style="left:0px;top:391px;width:551px;height:23px;background:#e1e1e1"></div>
<div class="a" style="left:0px;top:413px;width:551px;height:1px;background:#c6c6c6"></div>
<div class="a" style="left:29.9px;top:391px;width:1px;height:23px;background:#c6c6c6"></div>
<div class="a" style="left:211.1px;top:391px;width:1px;height:23px;background:#c6c6c6"></div>
<div class="a" style="left:351.8px;top:391px;width:1px;height:23px;background:#c6c6c6"></div>
<div class="a" style="left:8.3px;top:395px;width:14px;height:14px;background:#fff;border-top:1px solid #6e6e6e;border-left:1px solid #6e6e6e;border-right:1px solid #f4f4f4;border-bottom:1px solid #f4f4f4;box-shadow:inset 1px 1px 0 #a0a0a0"></div>
<svg class="a" style="left:10px;top:397.0px" width="10" height="10"><path d="M1.5 4.5L4 7L8.5 1.5" stroke="#000" stroke-width="1.9" fill="none"/></svg>
<div class="t" style="left:34.4px;top:396.63px;font-size:10.95px;color:#111">tee1</div>
<div class="t" style="left:215.4px;top:396.67px;font-size:10.9px;color:#111">0x2ea00000</div>
<div class="a" style="left:356px;top:391.0px;width:194px;height:22px;overflow:hidden">
<div class="t" style="left:1px;top:5.59px;font-size:11px;color:#111">J:\phonetoolkit\rom\xiaomi\redmi note 9\Xiaomi_Redmi_Note_9</div>
</div>
<div class="a" style="left:0px;top:414px;width:551px;height:23px;background:#e1e1e1"></div>
<div class="a" style="left:0px;top:436px;width:551px;height:1px;background:#c6c6c6"></div>
<div class="a" style="left:29.9px;top:414px;width:1px;height:23px;background:#c6c6c6"></div>
<div class="a" style="left:211.1px;top:414px;width:1px;height:23px;background:#c6c6c6"></div>
<div class="a" style="left:351.8px;top:414px;width:1px;height:23px;background:#c6c6c6"></div>
<div class="a" style="left:8.3px;top:418px;width:14px;height:14px;background:#fff;border-top:1px solid #6e6e6e;border-left:1px solid #6e6e6e;border-right:1px solid #f4f4f4;border-bottom:1px solid #f4f4f4;box-shadow:inset 1px 1px 0 #a0a0a0"></div>
<svg class="a" style="left:10px;top:420.0px" width="10" height="10"><path d="M1.5 4.5L4 7L8.5 1.5" stroke="#000" stroke-width="1.9" fill="none"/></svg>
<div class="t" style="left:34.4px;top:419.63px;font-size:10.95px;color:#111">tee2</div>
<div class="t" style="left:215.4px;top:419.67px;font-size:10.9px;color:#111">0x2ef00000</div>
<div class="a" style="left:356px;top:414.0px;width:194px;height:22px;overflow:hidden">
<div class="t" style="left:1px;top:5.59px;font-size:11px;color:#111">J:\phonetoolkit\rom\xiaomi\redmi note 9\Xiaomi_Redmi_Note_9</div>
</div>
<div class="a" style="left:0px;top:437px;width:551px;height:23px;background:#e1e1e1"></div>
<div class="a" style="left:0px;top:459px;width:551px;height:1px;background:#c6c6c6"></div>
<div class="a" style="left:29.9px;top:437px;width:1px;height:23px;background:#c6c6c6"></div>
<div class="a" style="left:211.1px;top:437px;width:1px;height:23px;background:#c6c6c6"></div>
<div class="a" style="left:351.8px;top:437px;width:1px;height:23px;background:#c6c6c6"></div>
<div class="a" style="left:8.3px;top:441px;width:14px;height:14px;background:#fff;border-top:1px solid #6e6e6e;border-left:1px solid #6e6e6e;border-right:1px solid #f4f4f4;border-bottom:1px solid #f4f4f4;box-shadow:inset 1px 1px 0 #a0a0a0"></div>
<svg class="a" style="left:10px;top:443.0px" width="10" height="10"><path d="M1.5 4.5L4 7L8.5 1.5" stroke="#000" stroke-width="1.9" fill="none"/></svg>
<div class="t" style="left:34.4px;top:442.63px;font-size:10.95px;color:#111">exaid</div>
<div class="t" style="left:215.4px;top:442.67px;font-size:10.9px;color:#111">0x38400000</div>
<div class="a" style="left:356px;top:437.0px;width:194px;height:22px;overflow:hidden">
<div class="t" style="left:1px;top:5.59px;font-size:11px;color:#111">J:\phonetoolkit\rom\xiaomi\redmi note 9\Xiaomi_Redmi_Note_9</div>
</div>
<div class="a" style="left:0px;top:460px;width:551px;height:23px;background:#e1e1e1"></div>
<div class="a" style="left:0px;top:482px;width:551px;height:1px;background:#c6c6c6"></div>
<div class="a" style="left:29.9px;top:460px;width:1px;height:23px;background:#c6c6c6"></div>
<div class="a" style="left:211.1px;top:460px;width:1px;height:23px;background:#c6c6c6"></div>
<div class="a" style="left:351.8px;top:460px;width:1px;height:23px;background:#c6c6c6"></div>
<div class="a" style="left:8.3px;top:464px;width:14px;height:14px;background:#fff;border-top:1px solid #6e6e6e;border-left:1px solid #6e6e6e;border-right:1px solid #f4f4f4;border-bottom:1px solid #f4f4f4;box-shadow:inset 1px 1px 0 #a0a0a0"></div>
<svg class="a" style="left:10px;top:466.0px" width="10" height="10"><path d="M1.5 4.5L4 7L8.5 1.5" stroke="#000" stroke-width="1.9" fill="none"/></svg>
<div class="t" style="left:34.4px;top:465.63px;font-size:10.95px;color:#111">cust</div>
<div class="t" style="left:215.4px;top:465.67px;font-size:10.9px;color:#111">0x50400000</div>
<div class="a" style="left:356px;top:460.0px;width:194px;height:22px;overflow:hidden">
<div class="t" style="left:1px;top:5.59px;font-size:11px;color:#111">J:\phonetoolkit\rom\xiaomi\redmi note 9\Xiaomi_Redmi_Note_9</div>
</div>
<div class="a" style="left:0px;top:483px;width:551px;height:23px;background:#e1e1e1"></div>
<div class="a" style="left:0px;top:505px;width:551px;height:1px;background:#c6c6c6"></div>
<div class="a" style="left:29.9px;top:483px;width:1px;height:23px;background:#c6c6c6"></div>
<div class="a" style="left:211.1px;top:483px;width:1px;height:23px;background:#c6c6c6"></div>
<div class="a" style="left:351.8px;top:483px;width:1px;height:23px;background:#c6c6c6"></div>
<div class="a" style="left:8.3px;top:487px;width:14px;height:14px;background:#fff;border-top:1px solid #6e6e6e;border-left:1px solid #6e6e6e;border-right:1px solid #f4f4f4;border-bottom:1px solid #f4f4f4;box-shadow:inset 1px 1px 0 #a0a0a0"></div>
<svg class="a" style="left:10px;top:489.0px" width="10" height="10"><path d="M1.5 4.5L4 7L8.5 1.5" stroke="#000" stroke-width="1.9" fill="none"/></svg>
<div class="t" style="left:34.4px;top:488.63px;font-size:10.95px;color:#111">rescue</div>
<div class="t" style="left:215.4px;top:488.67px;font-size:10.9px;color:#111">0x54400000</div>
<div class="a" style="left:356px;top:483.0px;width:194px;height:22px;overflow:hidden">
<div class="t" style="left:1px;top:5.59px;font-size:11px;color:#111">J:\phonetoolkit\rom\xiaomi\redmi note 9\Xiaomi_Redmi_Note_9</div>
</div>
</div>
<div class="a" style="left:592px;top:224px;width:18px;height:492px;background:#f0f0f0"></div>
<svg class="a" style="left:595px;top:228px" width="12" height="10"><path d="M2.2 7.6L5.8 4L9.4 7.6" stroke="#5a5a5a" stroke-width="2" fill="none"/></svg>
<div class="a" style="left:593px;top:241px;width:15px;height:16.5px;background:#cdcdcd"></div>
<svg class="a" style="left:595px;top:702px" width="12" height="10"><path d="M2.2 2.4L5.8 6L9.4 2.4" stroke="#5a5a5a" stroke-width="2" fill="none"/></svg>
<div class="a" style="left:39px;top:728px;width:148px;height:23px;background:#e1e1e1;border:1px solid #adadad"></div>
<div class="t" style="left:43.1px;top:734.47px;font-size:12.2px;color:#000">Download Only</div>
<svg class="a" style="left:172px;top:736px" width="11" height="7"><path d="M1 1L5.5 5.5L10 1" stroke="#505050" stroke-width="1.2" fill="none"/></svg>
<div class="a" style="left:194px;top:727px;width:416px;height:27px;background:#e1e1e1;border:1px solid #adadad"></div>
<div class="t" style="left:394.2px;top:734.79px;font-size:12.3px;color:#000">Flash</div>
<svg class="a" style="left:195.8px;top:731.3px" width="16" height="16" viewBox="0 0 16 16"><circle cx="8" cy="8" r="6.8" fill="none" stroke="#a8a8e0" stroke-width="1" stroke-dasharray="1.6 1.2"/><circle cx="8" cy="8" r="3.8" fill="#e8f0f4" stroke="#c0d8e0" stroke-width=".6"/><path d="M6 6L10 10" stroke="#e02020" stroke-width="1.6"/><path d="M10 6L6 10" stroke="#303030" stroke-width="1.2"/><circle cx="6.5" cy="6.2" r=".8" fill="#f02020"/><circle cx="9.5" cy="10.2" r=".7" fill="#202020"/></svg>
<div class="a" style="left:625px;top:169px;width:818px;height:235px;border:1px solid #d9d9d9;border-right:none"></div>
<div class="a" style="left:633px;top:165px;width:50px;height:10px;background:#f0f0f0"></div>
<div class="t" style="left:636.3px;top:164.44px;font-size:12px;color:#000">Settings</div>
<svg class="a" style="left:632px;top:187px" width="14" height="14"><circle cx="7" cy="7" r="5.9" fill="#fff" stroke="#333" stroke-width="1.35"/><circle cx="7" cy="7" r="3.4" fill="#333"/></svg>
<div class="t" style="left:649.4px;top:188.47px;font-size:12.2px;color:#000">Universal Device Config</div>
<svg class="a" style="left:793px;top:187px" width="14" height="14"><circle cx="7" cy="7" r="5.9" fill="#fff" stroke="#333" stroke-width="1.35"/></svg>
<div class="t" style="left:810px;top:188.47px;font-size:12.2px;color:#000">Manufacturer select base</div>
<div class="a" style="left:633px;top:219px;width:740px;height:23px;background:#fff;border:1px solid #7a7a7a"></div>
<div class="a" style="left:634px;top:220px;width:738px;height:21px;overflow:hidden">
<div class="t" style="left:2.3px;top:4.16px;font-size:12.1px;color:#626262">select download agent (DA) file</div>
</div>
<div class="a" style="left:1380px;top:220px;width:25px;height:18px;background:#e1e1e1;border:1px solid #adadad"></div>
<svg class="a" style="left:1384px;top:221px" width="18" height="16" viewBox="0 0 18 16"><defs><linearGradient id="eg" x1="0" y1="0" x2="1" y2="1"><stop offset="0" stop-color="#42a0de"/><stop offset="1" stop-color="#2a7fcc"/></linearGradient></defs><path d="M1 12.5L5 15" stroke="#cfcfcf" stroke-width="1.5"/><path d="M0 8.3L8.4 0.5L13.7 5.4L5.3 13.9Z" fill="url(#eg)"/></svg>
<div class="a" style="left:1413px;top:220px;width:25px;height:18px;background:#e1e1e1;border:1px solid #adadad"></div>
<div class="a" style="left:1417.85px;top:227.3px;width:3.3px;height:3.3px;background:#111;border-radius:50%"></div>
<div class="a" style="left:1423.15px;top:227.3px;width:3.3px;height:3.3px;background:#111;border-radius:50%"></div>
<div class="a" style="left:1428.75px;top:227.3px;width:3.3px;height:3.3px;background:#111;border-radius:50%"></div>
<div class="a" style="left:633px;top:248px;width:740px;height:23px;background:#fff;border:1px solid #7a7a7a"></div>
<div class="a" style="left:634px;top:249px;width:738px;height:21px;overflow:hidden">
<div class="t" style="left:2.3px;top:4.16px;font-size:12.1px;color:#626262">Select AUTH File</div>
</div>
<div class="a" style="left:1380px;top:249px;width:25px;height:18px;background:#e1e1e1;border:1px solid #adadad"></div>
<svg class="a" style="left:1384px;top:250px" width="18" height="16" viewBox="0 0 18 16"><defs><linearGradient id="eg" x1="0" y1="0" x2="1" y2="1"><stop offset="0" stop-color="#42a0de"/><stop offset="1" stop-color="#2a7fcc"/></linearGradient></defs><path d="M1 12.5L5 15" stroke="#cfcfcf" stroke-width="1.5"/><path d="M0 8.3L8.4 0.5L13.7 5.4L5.3 13.9Z" fill="url(#eg)"/></svg>
<div class="a" style="left:1413px;top:249px;width:25px;height:18px;background:#e1e1e1;border:1px solid #adadad"></div>
<div class="a" style="left:1417.85px;top:256.3px;width:3.3px;height:3.3px;background:#111;border-radius:50%"></div>
<div class="a" style="left:1423.15px;top:256.3px;width:3.3px;height:3.3px;background:#111;border-radius:50%"></div>
<div class="a" style="left:1428.75px;top:256.3px;width:3.3px;height:3.3px;background:#111;border-radius:50%"></div>
<div class="a" style="left:633px;top:274px;width:740px;height:23px;background:#fff;border:1px solid #7a7a7a"></div>
<div class="a" style="left:634px;top:275px;width:738px;height:21px;overflow:hidden">
<div class="t" style="left:2.3px;top:3.99px;font-size:12.3px;color:#000">aomi\redmi note 9\Xiaomi_Redmi_Note_9_MT6768_V11.0.3.0.QJOINXM_20200703.0000.00_India_10\Firmware\preloader_merlin.bin</div>
</div>
<div class="a" style="left:1380px;top:275px;width:25px;height:18px;background:#e1e1e1;border:1px solid #adadad"></div>
<svg class="a" style="left:1384px;top:276px" width="18" height="16" viewBox="0 0 18 16"><defs><linearGradient id="eg" x1="0" y1="0" x2="1" y2="1"><stop offset="0" stop-color="#42a0de"/><stop offset="1" stop-color="#2a7fcc"/></linearGradient></defs><path d="M1 12.5L5 15" stroke="#cfcfcf" stroke-width="1.5"/><path d="M0 8.3L8.4 0.5L13.7 5.4L5.3 13.9Z" fill="url(#eg)"/></svg>
<div class="a" style="left:1413px;top:275px;width:25px;height:18px;background:#e1e1e1;border:1px solid #adadad"></div>
<div class="a" style="left:1417.85px;top:282.3px;width:3.3px;height:3.3px;background:#111;border-radius:50%"></div>
<div class="a" style="left:1423.15px;top:282.3px;width:3.3px;height:3.3px;background:#111;border-radius:50%"></div>
<div class="a" style="left:1428.75px;top:282.3px;width:3.3px;height:3.3px;background:#111;border-radius:50%"></div>
<div class="a" style="left:633px;top:300px;width:740px;height:23px;background:#fff;border:1px solid #7a7a7a"></div>
<div class="a" style="left:634px;top:301px;width:738px;height:21px;overflow:hidden">
<div class="t" style="left:2.3px;top:4.16px;font-size:12.1px;color:#626262">Select CERT File</div>
</div>
<div class="a" style="left:1380px;top:301px;width:25px;height:18px;background:#e1e1e1;border:1px solid #adadad"></div>
<svg class="a" style="left:1384px;top:302px" width="18" height="16" viewBox="0 0 18 16"><defs><linearGradient id="eg" x1="0" y1="0" x2="1" y2="1"><stop offset="0" stop-color="#42a0de"/><stop offset="1" stop-color="#2a7fcc"/></linearGradient></defs><path d="M1 12.5L5 15" stroke="#cfcfcf" stroke-width="1.5"/><path d="M0 8.3L8.4 0.5L13.7 5.4L5.3 13.9Z" fill="url(#eg)"/></svg>
<div class="a" style="left:1413px;top:301px;width:25px;height:18px;background:#e1e1e1;border:1px solid #adadad"></div>
<div class="a" style="left:1417.85px;top:308.3px;width:3.3px;height:3.3px;background:#111;border-radius:50%"></div>
<div class="a" style="left:1423.15px;top:308.3px;width:3.3px;height:3.3px;background:#111;border-radius:50%"></div>
<div class="a" style="left:1428.75px;top:308.3px;width:3.3px;height:3.3px;background:#111;border-radius:50%"></div>
<div class="a" style="left:633px;top:326px;width:740px;height:23px;background:#fff;border:1px solid #7a7a7a"></div>
<div class="a" style="left:634px;top:327px;width:738px;height:21px;overflow:hidden">
<div class="t" style="left:2.3px;top:4.16px;font-size:12.1px;color:#626262">select DA folder (e.g. bin\n2\DA)</div>
</div>
<div class="a" style="left:1380px;top:327px;width:25px;height:18px;background:#e1e1e1;border:1px solid #adadad"></div>
<svg class="a" style="left:1384px;top:328px" width="18" height="16" viewBox="0 0 18 16"><defs><linearGradient id="eg" x1="0" y1="0" x2="1" y2="1"><stop offset="0" stop-color="#42a0de"/><stop offset="1" stop-color="#2a7fcc"/></linearGradient></defs><path d="M1 12.5L5 15" stroke="#cfcfcf" stroke-width="1.5"/><path d="M0 8.3L8.4 0.5L13.7 5.4L5.3 13.9Z" fill="url(#eg)"/></svg>
<div class="a" style="left:1413px;top:327px;width:25px;height:18px;background:#e1e1e1;border:1px solid #adadad"></div>
<div class="a" style="left:1417.85px;top:334.3px;width:3.3px;height:3.3px;background:#111;border-radius:50%"></div>
<div class="a" style="left:1423.15px;top:334.3px;width:3.3px;height:3.3px;background:#111;border-radius:50%"></div>
<div class="a" style="left:1428.75px;top:334.3px;width:3.3px;height:3.3px;background:#111;border-radius:50%"></div>
<div class="a" style="left:633px;top:358px;width:13px;height:13px;background:#fff;border:1px solid #333"></div>
<svg class="a" style="left:634px;top:359px" width="11" height="11"><path d="M1.5 5.5L4.3 8.3L9.8 2.3" stroke="#333" stroke-width="1.2" fill="none"/></svg>
<div class="t" style="left:649.1px;top:359.17px;font-size:12.2px;color:#000">Crash preloader</div>
<div class="a" style="left:755px;top:358px;width:13px;height:13px;background:#fff;border:1px solid #333"></div>
<svg class="a" style="left:756px;top:359px" width="11" height="11"><path d="M1.5 5.5L4.3 8.3L9.8 2.3" stroke="#333" stroke-width="1.2" fill="none"/></svg>
<div class="t" style="left:771px;top:359.17px;font-size:12.2px;color:#000">Patch da</div>
<div class="a" style="left:837px;top:358px;width:13px;height:13px;background:#fff;border:1px solid #333"></div>
<div class="t" style="left:853.3px;top:359.17px;font-size:12.2px;color:#000">Carbonara Exploit</div>
<div class="a" style="left:961px;top:358px;width:13px;height:13px;background:#fff;border:1px solid #333"></div>
<div class="t" style="left:977px;top:359.17px;font-size:12.2px;color:#000">HeapBait Exploit</div>
<div class="a" style="left:633px;top:381px;width:13px;height:13px;background:#fff;border:1px solid #333"></div>
<div class="t" style="left:649.1px;top:381.97px;font-size:12.2px;color:#000">Debug I/O</div>
<div class="a" style="left:716px;top:381px;width:13px;height:13px;background:#fff;border:1px solid #333"></div>
<div class="t" style="left:731.7px;top:381.97px;font-size:12.2px;color:#000">Skip WDT</div>
<div class="t" style="left:1196.9px;top:357.65px;font-size:11.75px;color:#000">SLA\DAA Bypass Mode:</div>
<div class="a" style="left:1328px;top:353px;width:111px;height:23px;background:#e1e1e1;border:1px solid #adadad"></div>
<div class="t" style="left:1331.5px;top:358.74px;font-size:12px;color:#000">AUTO</div>
<svg class="a" style="left:1423px;top:361px" width="11" height="7"><path d="M1 1L5.5 5.5L10 1" stroke="#505050" stroke-width="1.2" fill="none"/></svg>
<div class="a" style="left:625px;top:412px;width:818px;height:364px;border:1px solid #d9d9d9;border-bottom:none;border-right:none"></div>
<div class="a" style="left:632px;top:406px;width:44px;height:12px;background:#f0f0f0"></div>
<div class="t" style="left:635.8px;top:406.73px;font-size:12.6px;color:#000">Result</div>
<div class="a" style="left:627px;top:422px;width:814px;height:352px;background:#f0f0f0;border:1px solid #6a6a6a;border-right-color:#8a8a8a;border-bottom-color:#8a8a8a"></div>
<div class="a" style="left:629px;top:424px;width:810px;height:331px;background:#000"></div>
<div class="a" style="left:629px;top:424px;width:810px;height:331px;overflow:hidden">
<div class="t mono" style="left:0px;top:4.06px;font-size:11.667px"><span style="color:#00ff00"><span style="position:relative;top:3px">____</span>    <span style="position:relative;top:3px">____</span> <span style="position:relative;top:3px">__</span>    <span style="position:relative;top:3px">____</span>  <span style="position:relative;top:3px">__</span>  <span style="position:relative;top:3px">__</span> <span style="position:relative;top:3px">__</span></span></div>
<div class="t mono" style="left:0px;top:19.06px;font-size:11.667px"><span style="color:#00ff00">|| \\  ||    ||    || \\ ||  || ||</span></div>
<div class="t mono" style="left:0px;top:34.06px;font-size:11.667px"><span style="color:#00ff00">||  )) ||==  ||    ||<span style="position:relative;top:3px">_</span>// ||==|| ||</span></div>
<div class="t mono" style="left:0px;top:49.06px;font-size:11.667px"><span style="color:#00ff00">||<span style="position:relative;top:3px">_</span>//  ||<span style="position:relative;top:3px">___</span> ||<span style="position:relative;top:3px">__</span>| ||    ||  || ||</span></div>
<div class="t mono" style="left:0px;top:79.46px;font-size:11.667px"><span style="color:#00ff00"><span style="position:relative;top:3px">___</span>  <span style="position:relative;top:3px">___</span> <span style="position:relative;top:3px">______</span> <span style="position:relative;top:3px">__</span> <span style="position:relative;top:3px">__</span>   <span style="position:relative;top:3px">___</span> <span style="position:relative;top:3px">__</span>    <span style="position:relative;top:3px">__</span>  <span style="position:relative;top:3px">____</span> <span style="position:relative;top:3px">__</span>  <span style="position:relative;top:3px">__</span> <span style="position:relative;top:3px">______</span></span></div>
<div class="t mono" style="left:0px;top:94.46px;font-size:11.667px"><span style="color:#00ff00">||\\//|| | || | || //  //   ||    || ||    \ || | || |</span></div>
<div class="t mono" style="left:0px;top:109.46px;font-size:11.667px"><span style="color:#00ff00">|| \/ ||   ||   ||&lt;&lt;  ((    ||    || ||==  ||\\||   ||</span></div>
<div class="t mono" style="left:0px;top:124.46px;font-size:11.667px"><span style="color:#00ff00">||    ||   ||   || \\  \\<span style="position:relative;top:3px">__</span> ||<span style="position:relative;top:3px">__</span>| || ||<span style="position:relative;top:3px">___</span> || \||   ||</span></div>
<div class="t mono" style="left:0px;top:140.26px;font-size:11.667px"><span style="color:#00ff00;-webkit-text-stroke:0.35px #00ff00">=========================================================================</span></div>
<div class="t mono" style="left:0px;top:154.76px;font-size:11.667px"><span style="color:#00ff00;-webkit-text-stroke:0.35px #00ff00">Version:  </span><span style="color:#00ffff;-webkit-text-stroke:0.35px #00ffff">2026.04.25</span></div>
<div class="t mono" style="left:0px;top:170.46px;font-size:11.667px"><span style="color:#00ff00;-webkit-text-stroke:0.35px #00ff00">Powered by:  </span><span style="color:#00ffff;-webkit-text-stroke:0.35px #00ffff">Alephgsm.com</span></div>
<div class="t mono" style="left:0px;top:187.36px;font-size:11.667px"><span style="color:#00ff00;-webkit-text-stroke:0.35px #00ff00">=========================================================================</span></div>
<div class="t mono" style="left:0px;top:201.86px;font-size:11.667px"><span style="color:#00ff00;-webkit-text-stroke:0.35px #00ff00">Scatter loaded: 50 items from  </span><span style="color:#00ffff;-webkit-text-stroke:0.35px #00ffff">J:\phonetoolkit\rom\xiaomi\redmi note 9\Xiaomi_Redmi_Note_9_MT6768_V11.0.3.0.QJOINXM_20200703.0000.00_India_10\Firmware\MT6768_Android_scatter.txt</span></div>
<div class="t mono" style="left:0px;top:217.66px;font-size:11.667px"><span style="color:#00ff00;-webkit-text-stroke:0.35px #00ff00">Platform:  </span><span style="color:#00ffff;-webkit-text-stroke:0.35px #00ffff">:MT6768</span></div>
<div class="t mono" style="left:0px;top:233.76px;font-size:11.667px"><span style="color:#00ff00;-webkit-text-stroke:0.35px #00ff00">Storage:  </span><span style="color:#00ffff;-webkit-text-stroke:0.35px #00ffff">:EMMC</span></div>
</div>
<svg class="a" style="left:633px;top:758px" width="9" height="11"><path d="M6 2L2.2 5.5L6 9" stroke="#5a5a5a" stroke-width="2.1" fill="none"/></svg>
<div class="a" style="left:646px;top:757px;width:506px;height:15px;background:#cdcdcd"></div>
<svg class="a" style="left:1426px;top:758px" width="9" height="11"><path d="M2.5 2L6.3 5.5L2.5 9" stroke="#5a5a5a" stroke-width="2.1" fill="none"/></svg>
<div class="a" style="left:25px;top:774px;width:1418px;height:1px;background:#dcdcdc"></div>
<div class="a" style="left:26px;top:783px;width:1417px;height:54px;border-top:1px solid #d9d9d9;border-bottom:1px solid #e4e4e4"></div>
<div class="a" style="left:33px;top:777px;width:52px;height:12px;background:#f0f0f0"></div>
<div class="t" style="left:36.1px;top:778.12px;font-size:12.5px;color:#000">Process</div>
<div class="t" style="left:38.2px;top:803.24px;font-size:12px;color:#000">Status :</div>
<div class="a" style="left:323px;top:804px;width:1048px;height:10px;background:#e6e6e6;border:1px solid #bcbcbc"></div>
<div class="a" style="left:1376px;top:796px;width:54px;height:27px;background:#cccccc;border:1px solid #bfbfbf"></div>
<div class="t" style="left:1390.3px;top:804.37px;font-size:12.2px;color:#838383">Stop</div>
</body></html>
